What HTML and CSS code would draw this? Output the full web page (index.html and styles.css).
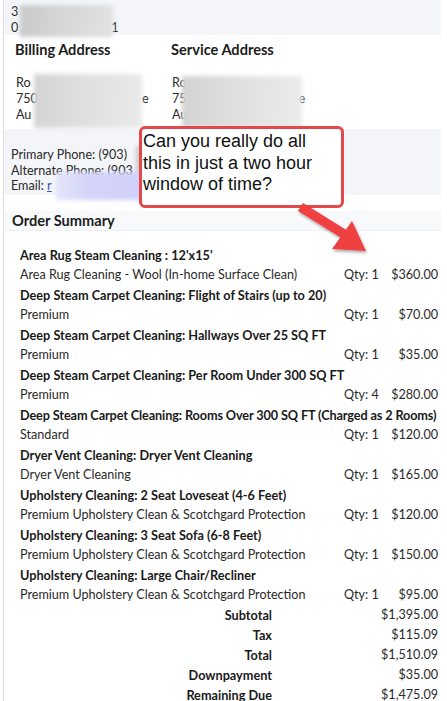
FILE: index.html
```html
<!DOCTYPE html>
<html>
<head>
<meta charset="utf-8">
<link rel="stylesheet" href="styles.css">
</head>
<body>
<div class="card">
  <div class="top">
    <div class="line">3</div>
    <div class="line">0<span class="gap g-top"></span>1</div>
  </div>

  <div class="addresses">
    <div class="addr">
      <h2 class="addr-title">Billing Address</h2>
      <div class="addr-lines">
        <div>Ro</div>
        <div>750<span class="gap g-bill"></span>e</div>
        <div>Au</div>
      </div>
    </div>
    <div class="addr">
      <h2 class="addr-title">Service Address</h2>
      <div class="addr-lines">
        <div>Ro</div>
        <div>75<span class="gap g-serv"></span>e</div>
        <div>Au</div>
      </div>
    </div>
  </div>

  <div class="contact">
    <div>Primary Phone: (903)</div>
    <div>Alternate Phone: (903</div>
    <div>Email: <a class="mail" href="#">r</a></div>
  </div>

  <div class="summary-head">Order Summary</div>

  <div class="items">
    <div class="title">Area Rug Steam Cleaning : 12'x15'</div>
    <div class="desc">Area Rug Cleaning - Wool (In-home Surface Clean)</div><div class="qty">Qty: 1</div><div class="price">$360.00</div>

    <div class="title">Deep Steam Carpet Cleaning: Flight of Stairs (up to 20)</div>
    <div class="desc">Premium</div><div class="qty">Qty: 1</div><div class="price">$70.00</div>

    <div class="title">Deep Steam Carpet Cleaning: Hallways Over 25 SQ FT</div>
    <div class="desc">Premium</div><div class="qty">Qty: 1</div><div class="price">$35.00</div>

    <div class="title">Deep Steam Carpet Cleaning: Per Room Under 300 SQ FT</div>
    <div class="desc">Premium</div><div class="qty">Qty: 4</div><div class="price">$280.00</div>

    <div class="title tight">Deep Steam Carpet Cleaning: Rooms Over 300 SQ FT (Charged as 2 Rooms)</div>
    <div class="desc">Standard</div><div class="qty">Qty: 1</div><div class="price">$120.00</div>

    <div class="title">Dryer Vent Cleaning: Dryer Vent Cleaning</div>
    <div class="desc">Dryer Vent Cleaning</div><div class="qty">Qty: 1</div><div class="price">$165.00</div>

    <div class="title">Upholstery Cleaning: 2 Seat Loveseat (4-6 Feet)</div>
    <div class="desc">Premium Upholstery Clean &amp; Scotchgard Protection</div><div class="qty">Qty: 1</div><div class="price">$120.00</div>

    <div class="title">Upholstery Cleaning: 3 Seat Sofa (6-8 Feet)</div>
    <div class="desc">Premium Upholstery Clean &amp; Scotchgard Protection</div><div class="qty">Qty: 1</div><div class="price">$150.00</div>

    <div class="title">Upholstery Cleaning: Large Chair/Recliner</div>
    <div class="desc">Premium Upholstery Clean &amp; Scotchgard Protection</div><div class="qty">Qty: 1</div><div class="price">$95.00</div>
  </div>

  <div class="totals">
    <div class="t-label">Subtotal</div><div class="t-value">$1,395.00</div>
    <div class="t-label">Tax</div><div class="t-value">$115.09</div>
    <div class="t-label">Total</div><div class="t-value">$1,510.09</div>
    <div class="t-label">Downpayment</div><div class="t-value">$35.00</div>
    <div class="t-label">Remaining Due</div><div class="t-value">$1,475.09</div>
  </div>

  <div class="blur b-top"></div>
  <div class="blur b-bill"></div>
  <div class="blur b-serv"></div>
  <div class="blur b-phone"></div>
  <div class="blur b-mail"></div>

  <div class="callout">Can you really do all this in just a two hour window of time?</div>
</div>

<svg class="arrow" width="447" height="701" viewBox="0 0 447 701" aria-hidden="true">
  <defs>
    <filter id="sh" x="-20%" y="-20%" width="140%" height="140%">
      <feDropShadow dx="1" dy="2" stdDeviation="1.6" flood-color="#000" flood-opacity="0.35"/>
    </filter>
  </defs>
  <g filter="url(#sh)" fill="#ef3f43">
    <polygon points="303,203 348,231 343,239 298,211"/>
    <polygon points="352,221 366,251 332,249"/>
  </g>
</svg>
</body>
</html>
```
FILE: styles.css
```css
html, body {
  margin: 0;
  padding: 0;
  background: #ffffff;
}
body {
  position: relative;
  width: 447px;
  height: 701px;
  overflow: hidden;
  font-family: "Lato", "Liberation Sans", sans-serif;
  color: #2a2a2a;
}
.card {
  position: relative;
  margin-left: 3px;
  width: 437px;
  border-left: 1px solid #dcdcdc;
  font-size: 12.6px;
}
.top {
  box-sizing: border-box;
  height: 35px;
  padding: 4px 0 0 7px;
  background: #f3f5f8;
}
.line {
  line-height: 16px;
  white-space: nowrap;
}
.gap {
  display: inline-block;
}
.g-top { width: 93px; }
.g-bill { width: 104px; }
.g-serv { width: 112px; }

.addresses {
  display: grid;
  grid-template-columns: 156px 1fr;
  padding: 6px 0 6px 11px;
}
.addr-title {
  margin: 0 0 16px;
  font-size: 14.6px;
  line-height: 18px;
  font-weight: 700;
  color: #1c1c1c;
}
.addr-lines {
  line-height: 16px;
  padding-left: 1px;
  white-space: nowrap;
}

.contact {
  box-sizing: border-box;
  height: 66px;
  padding: 18px 0 0 7px;
  background: #f3f5f8;
  line-height: 15.5px;
  white-space: nowrap;
}
.mail {
  color: #3b49c4;
  text-decoration: underline;
}

.summary-head {
  margin-top: 16px;
  padding-left: 8px;
  line-height: 19px;
  font-size: 14.6px;
  font-weight: 700;
  color: #1c1c1c;
  background: #f8f9fb;
  border-bottom: 1px solid #eef0f3;
}

.items {
  display: grid;
  grid-template-columns: 1fr 40px 54px;
  margin-top: 14px;
  padding: 0 3px 0 16px;
  line-height: 20px;
}
.title {
  grid-column: 1 / -1;
  font-weight: 700;
  font-size: 12.7px;
  color: #1a1a1a;
  white-space: nowrap;
}
.title.tight {
  letter-spacing: -0.12px;
}
.desc,
.qty,
.price {
  white-space: nowrap;
}
.price {
  text-align: right;
}

.totals {
  display: grid;
  grid-template-columns: 268px 1fr;
  padding: 0 3px 0 0;
  line-height: 20px;
}
.t-label {
  text-align: right;
  font-weight: 700;
  font-size: 12.7px;
  color: #1a1a1a;
}
.t-value {
  text-align: right;
}

.blur {
  position: absolute;
  filter: blur(2px);
}
.b-top {
  left: 16px;
  top: 5px;
  width: 93px;
  height: 32px;
  background: linear-gradient(100deg, #c9c9c9 0%, #d6d6d6 45%, #e2e2e2 100%);
}
.b-bill {
  left: 30px;
  top: 74px;
  width: 108px;
  height: 54px;
  background: linear-gradient(95deg, #d4d4d4 0%, #e0e0e0 50%, #eaeaea 100%);
}
.b-serv {
  left: 178px;
  top: 76px;
  width: 120px;
  height: 52px;
  background: linear-gradient(95deg, #d2d2d2 0%, #dedede 40%, #ececec 100%);
}
.b-phone {
  left: 132px;
  top: 146px;
  width: 18px;
  height: 28px;
  background: #c9c9c9;
}
.b-mail {
  left: 52px;
  top: 172px;
  width: 90px;
  height: 28px;
  background: linear-gradient(90deg, #e4e4fa 0%, #d3d3fa 40%, #cfcffa 100%);
}

.callout {
  position: absolute;
  left: 135px;
  top: 126px;
  box-sizing: border-box;
  width: 205px;
  height: 82px;
  padding: 2px 4px 0 1px;
  border: 3px solid #e4474c;
  border-radius: 6px;
  background: #ffffff;
  font-family: "Liberation Sans", Arial, sans-serif;
  font-size: 18px;
  line-height: 21.5px;
  color: #111111;
}

.arrow {
  position: absolute;
  left: 0;
  top: 0;
  pointer-events: none;
}
```
